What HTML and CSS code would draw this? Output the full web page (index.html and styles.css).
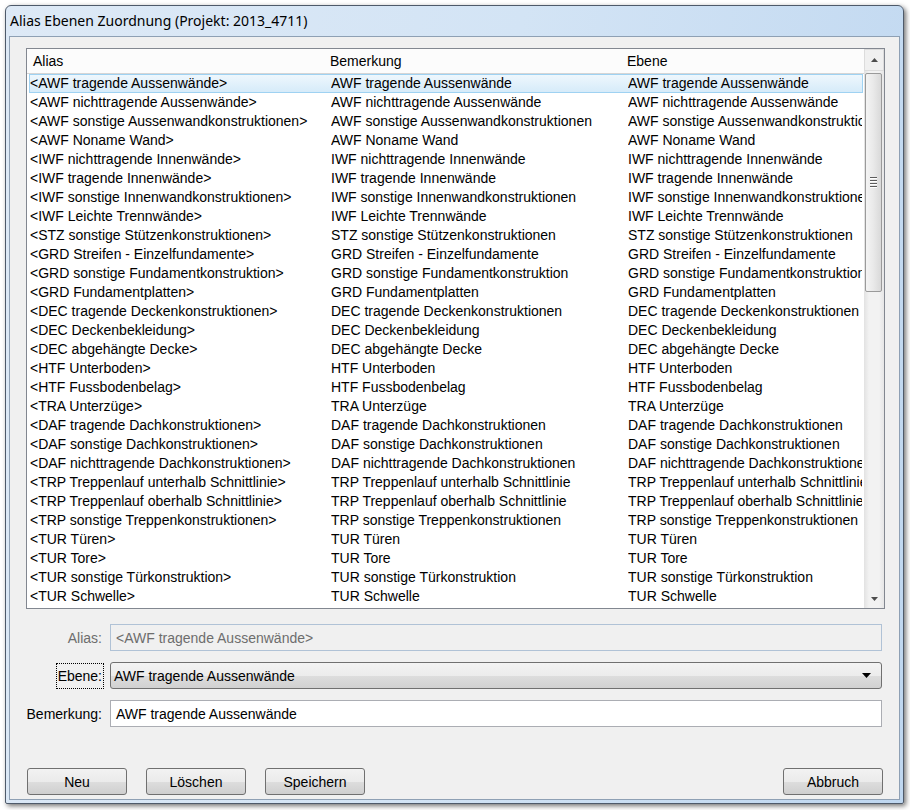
FILE: index.html
```html
<!DOCTYPE html>
<html lang="de">
<head>
<meta charset="utf-8">
<title>Alias Ebenen Zuordnung</title>
<link rel="stylesheet" href="styles.css">
</head>
<body>
<div class="window">
  <div class="titlebar">Alias Ebenen Zuordnung (Projekt: 2013_4711)</div>
  <div class="frame">
    <div class="client">
      <div class="listview">
        <div class="list-main">
          <div class="header">
            <div class="hc c1">Alias</div>
            <div class="hc c2">Bemerkung</div>
            <div class="hc c3">Ebene</div>
          </div>
          <div class="rows">
            <div class="row selected"><span class="c1">&lt;AWF tragende Aussenwände&gt;</span><span class="c2">AWF tragende Aussenwände</span><span class="c3">AWF tragende Aussenwände</span></div>
            <div class="row"><span class="c1">&lt;AWF nichttragende Aussenwände&gt;</span><span class="c2">AWF nichttragende Aussenwände</span><span class="c3">AWF nichttragende Aussenwände</span></div>
            <div class="row"><span class="c1">&lt;AWF sonstige Aussenwandkonstruktionen&gt;</span><span class="c2">AWF sonstige Aussenwandkonstruktionen</span><span class="c3">AWF sonstige Aussenwandkonstruktionen</span></div>
            <div class="row"><span class="c1">&lt;AWF Noname Wand&gt;</span><span class="c2">AWF Noname Wand</span><span class="c3">AWF Noname Wand</span></div>
            <div class="row"><span class="c1">&lt;IWF nichttragende Innenwände&gt;</span><span class="c2">IWF nichttragende Innenwände</span><span class="c3">IWF nichttragende Innenwände</span></div>
            <div class="row"><span class="c1">&lt;IWF tragende Innenwände&gt;</span><span class="c2">IWF tragende Innenwände</span><span class="c3">IWF tragende Innenwände</span></div>
            <div class="row"><span class="c1">&lt;IWF sonstige Innenwandkonstruktionen&gt;</span><span class="c2">IWF sonstige Innenwandkonstruktionen</span><span class="c3">IWF sonstige Innenwandkonstruktionen</span></div>
            <div class="row"><span class="c1">&lt;IWF Leichte Trennwände&gt;</span><span class="c2">IWF Leichte Trennwände</span><span class="c3">IWF Leichte Trennwände</span></div>
            <div class="row"><span class="c1">&lt;STZ sonstige Stützenkonstruktionen&gt;</span><span class="c2">STZ sonstige Stützenkonstruktionen</span><span class="c3">STZ sonstige Stützenkonstruktionen</span></div>
            <div class="row"><span class="c1">&lt;GRD Streifen - Einzelfundamente&gt;</span><span class="c2">GRD Streifen - Einzelfundamente</span><span class="c3">GRD Streifen - Einzelfundamente</span></div>
            <div class="row"><span class="c1">&lt;GRD sonstige Fundamentkonstruktion&gt;</span><span class="c2">GRD sonstige Fundamentkonstruktion</span><span class="c3">GRD sonstige Fundamentkonstruktion</span></div>
            <div class="row"><span class="c1">&lt;GRD Fundamentplatten&gt;</span><span class="c2">GRD Fundamentplatten</span><span class="c3">GRD Fundamentplatten</span></div>
            <div class="row"><span class="c1">&lt;DEC tragende Deckenkonstruktionen&gt;</span><span class="c2">DEC tragende Deckenkonstruktionen</span><span class="c3">DEC tragende Deckenkonstruktionen</span></div>
            <div class="row"><span class="c1">&lt;DEC Deckenbekleidung&gt;</span><span class="c2">DEC Deckenbekleidung</span><span class="c3">DEC Deckenbekleidung</span></div>
            <div class="row"><span class="c1">&lt;DEC abgehängte Decke&gt;</span><span class="c2">DEC abgehängte Decke</span><span class="c3">DEC abgehängte Decke</span></div>
            <div class="row"><span class="c1">&lt;HTF Unterboden&gt;</span><span class="c2">HTF Unterboden</span><span class="c3">HTF Unterboden</span></div>
            <div class="row"><span class="c1">&lt;HTF Fussbodenbelag&gt;</span><span class="c2">HTF Fussbodenbelag</span><span class="c3">HTF Fussbodenbelag</span></div>
            <div class="row"><span class="c1">&lt;TRA Unterzüge&gt;</span><span class="c2">TRA Unterzüge</span><span class="c3">TRA Unterzüge</span></div>
            <div class="row"><span class="c1">&lt;DAF tragende Dachkonstruktionen&gt;</span><span class="c2">DAF tragende Dachkonstruktionen</span><span class="c3">DAF tragende Dachkonstruktionen</span></div>
            <div class="row"><span class="c1">&lt;DAF sonstige Dachkonstruktionen&gt;</span><span class="c2">DAF sonstige Dachkonstruktionen</span><span class="c3">DAF sonstige Dachkonstruktionen</span></div>
            <div class="row"><span class="c1">&lt;DAF nichttragende Dachkonstruktionen&gt;</span><span class="c2">DAF nichttragende Dachkonstruktionen</span><span class="c3">DAF nichttragende Dachkonstruktionen</span></div>
            <div class="row"><span class="c1">&lt;TRP Treppenlauf unterhalb Schnittlinie&gt;</span><span class="c2">TRP Treppenlauf unterhalb Schnittlinie</span><span class="c3">TRP Treppenlauf unterhalb Schnittlinie</span></div>
            <div class="row"><span class="c1">&lt;TRP Treppenlauf oberhalb Schnittlinie&gt;</span><span class="c2">TRP Treppenlauf oberhalb Schnittlinie</span><span class="c3">TRP Treppenlauf oberhalb Schnittlinie</span></div>
            <div class="row"><span class="c1">&lt;TRP sonstige Treppenkonstruktionen&gt;</span><span class="c2">TRP sonstige Treppenkonstruktionen</span><span class="c3">TRP sonstige Treppenkonstruktionen</span></div>
            <div class="row"><span class="c1">&lt;TUR Türen&gt;</span><span class="c2">TUR Türen</span><span class="c3">TUR Türen</span></div>
            <div class="row"><span class="c1">&lt;TUR Tore&gt;</span><span class="c2">TUR Tore</span><span class="c3">TUR Tore</span></div>
            <div class="row"><span class="c1">&lt;TUR sonstige Türkonstruktion&gt;</span><span class="c2">TUR sonstige Türkonstruktion</span><span class="c3">TUR sonstige Türkonstruktion</span></div>
            <div class="row"><span class="c1">&lt;TUR Schwelle&gt;</span><span class="c2">TUR Schwelle</span><span class="c3">TUR Schwelle</span></div>
            <div class="row"><span class="c1">&lt;TUR Tür&gt;</span><span class="c2">TUR Tür</span><span class="c3">TUR Tür</span></div>
          </div>
        </div>
        <div class="scrollbar">
          <div class="sb-btn sb-up"><svg width="7" height="4" viewBox="0 0 7 4"><path d="M0 4 L3.5 0 L7 4 Z" fill="#4d4d4d"/></svg></div>
          <div class="sb-track">
            <div class="sb-thumb"><span class="grip"></span><span class="grip"></span><span class="grip"></span><span class="grip"></span></div>
          </div>
          <div class="sb-btn sb-down"><svg width="7" height="4" viewBox="0 0 7 4"><path d="M0 0 L7 0 L3.5 4 Z" fill="#4d4d4d"/></svg></div>
        </div>
      </div>

      <div class="form">
        <label class="lbl disabled">Alias:</label>
        <div class="field field-disabled">&lt;AWF tragende Aussenwände&gt;</div>

        <label class="lbl"><span class="focus">Ebene:</span></label>
        <div class="combo"><span>AWF tragende Aussenwände</span><svg width="9" height="5" viewBox="0 0 9 5"><path d="M0 0 L9 0 L4.5 5 Z" fill="#000"/></svg></div>

        <label class="lbl">Bemerkung:</label>
        <div class="field">AWF tragende Aussenwände</div>
      </div>

      <div class="buttons">
        <button class="btn">Neu</button>
        <button class="btn">Löschen</button>
        <button class="btn">Speichern</button>
        <span class="spacer"></span>
        <button class="btn">Abbruch</button>
      </div>
    </div>
  </div>
</div>
</body>
</html>
```

FILE: styles.css
```css
html, body {
  margin: 0;
  padding: 0;
  background: #ffffff;
}
body {
  width: 910px;
  height: 810px;
  overflow: hidden;
  font-family: "Liberation Sans", Arial, sans-serif;
  font-size: 14px;
  color: #000;
}
.window {
  margin: 5px 0 0 5px;
  width: 899px;
  height: 799px;
  box-sizing: border-box;
  border: 1px solid #4e5a6a;
  border-radius: 6px 6px 2px 2px;
  background: linear-gradient(100deg, #dde9f6 0%, #d3e4f5 50%, #bfd7f0 100%);
  box-shadow: 2px 2px 5px rgba(0, 0, 0, 0.55);
  display: flex;
  flex-direction: column;
  overflow: hidden;
}
.titlebar {
  height: 30px;
  line-height: 30px;
  padding-left: 4px;
  font-family: "Noto Sans", "Open Sans", sans-serif;
  font-size: 14px;
  color: #000;
  white-space: nowrap;
}
.frame {
  flex: 1;
  min-width: 0;
  min-height: 0;
  padding: 0 3px 3px 3px;
  display: flex;
}
.client {
  width: 891px;
  box-sizing: border-box;
  flex: none;
  min-width: 0;
  background: #f0f0f0;
  border: 1px solid #8ea0b4;
  padding: 11px 13px 0 16px;
  display: flex;
  flex-direction: column;
  overflow: hidden;
}
.listview {
  width: 859px;
  height: 561px;
  box-sizing: border-box;
  border: 1px solid #828790;
  background: #fff;
  display: flex;
  overflow: hidden;
}
.list-main {
  width: 837px;
  flex: none;
  overflow: hidden;
}
.header {
  height: 25px;
  box-sizing: border-box;
  border-bottom: 1px solid #d5d5d5;
  background: #fcfcfc;
  display: flex;
  align-items: center;
}
.hc { white-space: nowrap; }
.header .c1 { width: 301px; padding-left: 6px; box-sizing: border-box; flex: none; }
.header .c2 { width: 297px; padding-left: 2px; box-sizing: border-box; flex: none; }
.header .c3 { flex: 1; padding-left: 2px; }
.row {
  height: 19px;
  box-sizing: border-box;
  margin: 0 1px 0 2px;
  border: 1px solid transparent;
  display: flex;
  align-items: center;
  white-space: nowrap;
  line-height: 17px;
}
.row.selected {
  border-color: #9fd2f2;
  background: linear-gradient(#eef7fd, #d6ebf9);
}
.row .c1 { width: 301px; flex: none; overflow: hidden; }
.row .c2 { width: 297px; flex: none; overflow: hidden; }
.row .c3 { flex: 1; min-width: 0; overflow: hidden; }
.scrollbar {
  width: 20px;
  flex: none;
  display: flex;
  flex-direction: column;
  background: linear-gradient(to right, #e2e2e2, #f2f2f2 25%, #f2f2f2 75%, #e6e6e6);
}
.sb-btn {
  height: 22px;
  display: flex;
  align-items: center;
  justify-content: center;
  box-sizing: border-box;
}
.sb-up {
  border: 1px solid #dcdcdc;
  background: #f0f0f0;
}
.sb-down {
  height: 18px;
}
.sb-track {
  flex: 1;
  padding-top: 2px;
}
.sb-thumb {
  height: 219px;
  margin: 0 2px 0 1px;
  box-sizing: border-box;
  border: 1px solid #9a9a9a;
  border-radius: 2px;
  background: linear-gradient(to right, #f4f4f4, #e9e9e9 50%, #d9d9d9);
  display: flex;
  flex-direction: column;
  justify-content: center;
  align-items: center;
  gap: 1px;
}
.grip {
  width: 7px;
  height: 1px;
  background: #5c5c5c;
  border-bottom: 1px solid #fff;
}
.form {
  margin-top: 15px;
  display: grid;
  grid-template-columns: 76px 772px;
  column-gap: 8px;
  row-gap: 11px;
  align-items: center;
}
.lbl {
  text-align: right;
  white-space: nowrap;
}
.lbl.disabled { color: #6d6d6d; }
.focus {
  outline: 1px dotted #000;
  outline-offset: 1px;
  padding: 3px 0;
}
.field {
  height: 27px;
  box-sizing: border-box;
  border: 1px solid #abadb3;
  background: #fff;
  padding-left: 5px;
  display: flex;
  align-items: center;
  white-space: nowrap;
}
.field-disabled {
  background: #f0f0f0;
  border-color: #b0c2d6;
  color: #6d6d6d;
}
.combo {
  height: 27px;
  box-sizing: border-box;
  border: 1px solid #707070;
  border-radius: 3px;
  background: linear-gradient(#f3f3f3 0%, #ececec 50%, #dddddd 52%, #d1d1d1 100%);
  padding: 0 10px 0 3px;
  display: flex;
  align-items: center;
  justify-content: space-between;
}
.buttons {
  margin-top: 41px;
  display: flex;
  gap: 19px;
  padding-left: 1px;
  padding-right: 3px;
}
.spacer { flex: 1; }
.btn {
  width: 100px;
  height: 27px;
  flex: none;
  border: 1px solid #707070;
  border-radius: 3px;
  background: linear-gradient(#f2f2f2 0%, #ebebeb 50%, #dddddd 52%, #cfcfcf 100%);
  font-family: "Liberation Sans", Arial, sans-serif;
  font-size: 14px;
  color: #000;
  padding: 0;
}
```
